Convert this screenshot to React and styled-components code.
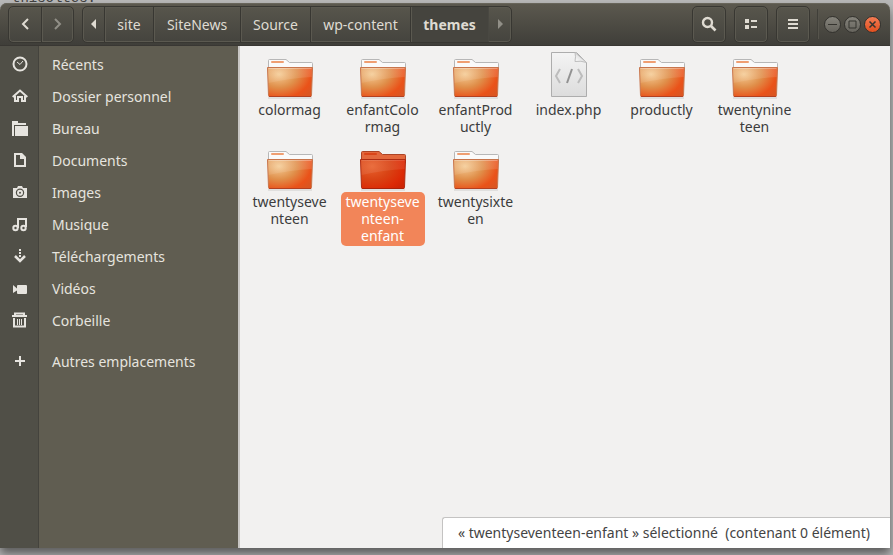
import React from 'react';
import styled, { createGlobalStyle, css } from 'styled-components';

const Global = createGlobalStyle`
  *, *::before, *::after { box-sizing: border-box; }
  body { margin: 0; overflow: hidden; background: #b9b9b9; font-family: "Noto Sans", "Open Sans", sans-serif; font-size: 14px; color: #444; }
  button { font: inherit; color: inherit; border: 0; padding: 0; background: none; }
`;

const Desktop = styled.div`
  position: relative;
  min-height: 100vh;
  padding: 3px 3px 7px 0;
  display: flex;
  background: #b9b9b9;
`;
const Behind = styled.div`
  position: absolute;
  top: 0; left: 0; right: 0;
  height: 3px;
  overflow: hidden;
  display: flex;
  align-items: flex-end;
  padding-left: 12px;
  color: #404040;
  font-family: "Liberation Mono", monospace;
  line-height: 10px;
`;
const Window = styled.div`
  position: relative;
  flex: 1;
  min-width: 0;
  display: flex;
  flex-direction: column;
  border-radius: 7px 7px 0 0;
  box-shadow: 0 6px 10px rgba(0, 0, 0, 0.5);
`;
const Header = styled.header`
  height: 43px;
  display: flex;
  align-items: center;
  padding: 0 8px;
  border-radius: 7px 7px 0 0;
  border-bottom: 1px solid #393733;
  background: linear-gradient(180deg, #5c594f, #3f3e39);
  box-shadow: inset 0 1px 0 #68655b;
  color: #dfdbd2;
`;
const frame = css`
  border: 1px solid #383732;
  border-radius: 5px;
  background: linear-gradient(180deg, #57554c, #45443e);
  box-shadow: inset 0 0 0 1px #5b5950;
`;
const Group = styled.nav`
  ${frame}
  height: 37px;
  display: flex;
  overflow: hidden;
  margin-right: ${p => p.$gap || 0}px;
`;
const Segment = styled.button`
  width: ${p => p.$w}px;
  display: flex;
  align-items: center;
  justify-content: center;
  color: ${p => (p.$dim ? '#918f87' : '#dfdbd2')};
  font-weight: ${p => (p.$current ? 700 : 400)};
  & + & { border-left: 1px solid #383732; box-shadow: inset 1px 0 0 #5b5950; }
  ${p => p.$current && css`
    && { background: #45443e; box-shadow: inset 1px 2px 3px #33322e; }
  `}
  ${p => p.$last && css`&& { border-left-color: #494842; box-shadow: none; }`}
`;
const Tools = styled.div`
  margin-left: auto;
  display: flex;
  gap: 8px;
`;
const Tool = styled.button`
  ${frame}
  && { border: 1px solid #383732; background: linear-gradient(180deg, #57554c, #45443e); }
  width: 34px;
  height: 37px;
  display: grid;
  place-items: center;
`;
const Rule = styled.div`
  width: 2px;
  height: 30px;
  margin: 0 5px 0 7px;
  background: linear-gradient(90deg, #403f39 50%, #56544c 50%);
`;
const Controls = styled.div`
  display: flex;
  gap: 3px;
  padding-right: 1px;
`;
const Control = styled.button`
  && { border: 1px solid #33322e; background: ${p => (p.$close ? 'linear-gradient(180deg, #f37b53, #e2501f)' : 'linear-gradient(180deg, #85837b, #66645d)')}; }
  width: 17px;
  height: 17px;
  border-radius: 50%;
  display: grid;
  place-items: center;
  color: #35342f;
`;
const Body = styled.div`
  flex: 1;
  display: flex;
  min-height: 0;
`;
const Sidebar = styled.aside`
  width: 240px;
  flex: none;
  padding-top: 2px;
  border-right: 2px solid #c8c6c4;
  background: linear-gradient(90deg, #504f47 38px, #44433d 38px, #44433d 39px, #605d51 39px);
`;
const Place = styled.a`
  height: 32px;
  display: grid;
  grid-template-columns: 39px 1fr;
  column-gap: 13px;
  align-items: center;
  color: #e6e4df;
  text-decoration: none;
  margin-top: ${p => (p.$apart ? 9 : 0)}px;
  svg { justify-self: center; }
`;
const Main = styled.main`
  position: relative;
  flex: 1;
  min-width: 0;
  background: #f2f1f0;
  padding: 5px 3px;
`;
const Files = styled.div`
  display: grid;
  grid-template-columns: repeat(auto-fill, 93px);
  grid-auto-rows: minmax(92px, auto);
  padding-right: 80px;
  align-items: start;
`;
const File = styled.button`
  display: flex;
  flex-direction: column;
  align-items: center;
  gap: 1px;
`;
const Label = styled.span`
  width: 84px;
  padding: 1px 0 2px;
  border-radius: 5px;
  line-height: 17px;
  white-space: pre;
  text-align: center;
  background: ${p => (p.$selected ? '#f28559' : 'transparent')};
  color: ${p => (p.$selected ? '#fff' : '#3c3c3c')};
`;
const Status = styled.div`
  position: absolute;
  right: 0;
  bottom: 0;
  height: 31px;
  padding: 0 20px 1px 15px;
  display: flex;
  align-items: center;
  white-space: pre;
  background: #fff;
  border: solid #c4c3c2;
  border-width: 1px 0 0 1px;
  border-radius: 3px 0 0 0;
`;

const Icon = ({ children, size = 16 }) => (
  <svg width={size} height={size} viewBox={`0 0 ${size} ${size}`} fill="none" stroke="currentColor" strokeWidth="2" aria-hidden="true">{children}</svg>
);
const solid = { fill: 'currentColor', stroke: 'none' };

function Folder({ selected }) {
  const id = selected ? 'sel' : 'std';
  return (
    <svg width="48" height="48" viewBox="0 0 48 48" aria-hidden="true">
      <defs>
        <radialGradient id={`${id}-body`} gradientUnits="userSpaceOnUse" cx="13" cy="23" r="39" gradientTransform="translate(0 6) scale(1 .75)">
          <stop offset="0" stopColor={selected ? '#e8622e' : '#f4cb94'} />
          <stop offset=".45" stopColor={selected ? '#d94415' : '#e08f4a'} />
          <stop offset=".82" stopColor={selected ? '#dc2a06' : '#ea5219'} />
          <stop offset="1" stopColor={selected ? '#cf2505' : '#dc5520'} />
        </radialGradient>
        <linearGradient id={`${id}-shine`} x2="0" y2="1">
          <stop stopColor="#fff" stopOpacity={selected ? '.08' : '.16'} />
          <stop offset="1" stopColor="#fff" stopOpacity=".08" />
        </linearGradient>
      </defs>
      <path d="M2 47h44" stroke="#000" strokeOpacity=".15" />
      <path d="M2.500 20V9.500q0-1 1-1h16.500l3.500 3h22q1 0 1 1V20z" fill={selected ? '#e3683d' : '#fafafa'} stroke={selected ? '#ad4426' : '#b7b7b7'} />
      <rect x="5" y="10" width="13" height="2" rx="1" fill={selected ? '#da4519' : '#ef9e71'} />
      <path d="M1.500 16.500h45L45.500 44.500q0 1-1 1h-41q-1 0-1-1z" fill={`url(#${id}-body)`} stroke={selected ? '#ae2c12' : '#c8754c'} />
      <path d="M2 17h44l-.3 9Q25 27 2.500 32z" fill={`url(#${id}-shine)`} />
      <path d="M2.500 17.500h43" stroke="#fff" strokeOpacity={selected ? '.12' : '.3'} />
      <path d="M3 45.500h42" stroke="#a51d05" strokeOpacity=".6" />
    </svg>
  );
}

const Php = () => (
  <svg width="48" height="48" viewBox="0 0 48 48" aria-hidden="true">
    <defs>
      <linearGradient id="paper" x2="0" y2="1"><stop stopColor="#f4f4f4" /><stop offset="1" stopColor="#dcdcdc" /></linearGradient>
      <linearGradient id="fold" x1="0" y1="1" x2="1" y2="0"><stop stopColor="#fff" /><stop offset="1" stopColor="#c8c8c8" /></linearGradient>
    </defs>
    <path d="M6.500 1.500h25l10 10v34h-35z" fill="url(#paper)" stroke="#adadad" />
    <path d="M30 1.500q1 4 0 9 6-1 11.500 1z" fill="url(#fold)" stroke="#bebebe" />
    <path d="m15 18-4 7 4 7M33 18l4 7-4 7" fill="none" stroke="#bcbcbc" strokeWidth="2" />
    <path d="m27 18-5 14" stroke="#929292" strokeWidth="2" />
  </svg>
);

const places = [
  ['Récents', <><circle cx="8" cy="8" r="6.500" /><path d="m5 6 3 2.500L11 5" strokeWidth="1" /></>],
  ['Dossier personnel', <><path d="m.7 9 7.300-6.500L15.300 9" /><path d="M3 8v5h3v-4h4v4h3V8" /></>],
  ['Bureau', <><path {...solid} d="M0 1h6v2h8v2H2v11H0z" /><path {...solid} d="M3 6h13v10H3z" /></>],
  ['Documents', <><path d="M3 2h6l4 4v8H3z" /><path {...solid} d="M8 1h2l4 4v2H8z" /></>],
  ['Images', <><path {...solid} fillRule="evenodd" d="M1 4h4l1-2h4l1 2h4v10H1zM8 4.500a4.200 4.200 0 100 8.400 4.200 4.200 0 000-8.400z" /><circle cx="8" cy="8.700" r="2" strokeWidth="2" /></>],
  ['Musique', <><path d="M6 12V3h8v8" /><circle cx="3.500" cy="12" r="2.200" /><circle cx="11.500" cy="12" r="2.200" /></>],
  ['Téléchargements', <><path d="M8 1v8" strokeDasharray="2 1" /><path d="m3 8 5 5 5-5" strokeWidth="2.500" /></>],
  ['Vidéos', <path {...solid} d="m1 5 4 3.500V6q0-1 1-1h8q1 0 1 1v7q0 1-1 1H6q-1 0-1-1v-2.500L1 13z" />],
  ['Corbeille', <><path d="M0 4h15M3 3V1.500h9V3" /><path d="M2 6v8.500h11V6" /><path d="M5.500 7v6M7.500 7v6M9.500 7v6" strokeWidth="1" /></>],
  ['Autres emplacements', <path d="M3 8h10M8 3v10" />],
];
const files = ['colormag', 'enfantColo\nrmag', 'enfantProd\nuctly', 'index.php', 'productly', 'twentynine\nteen', 'twentyseve\nnteen', 'twentyseve\nnteen-\nenfant', 'twentysixte\nen'];
const SELECTED = 7;

export default function App() {
  return (
    <Desktop>
      <Global />
      <Window>
        <Header>
          <Group $gap={8} aria-label="Historique">
            <Segment $w={32} aria-label="Précédent"><Icon><path d="m11 3-5 5 5 5" /></Icon></Segment>
            <Segment $w={32} $dim aria-label="Suivant"><Icon><path d="m5 3 5 5-5 5" /></Icon></Segment>
          </Group>
          <Group aria-label="Chemin">
            <Segment $w={21} aria-label="Défiler à gauche"><Icon><path {...solid} d="M10 3v10L5 8z" /></Icon></Segment>
            <Segment $w={49}>site</Segment>
            <Segment $w={87}>SiteNews</Segment>
            <Segment $w={70}>Source</Segment>
            <Segment $w={100}>wp-content</Segment>
            <Segment $w={78} $current>themes</Segment>
            <Segment $w={23} $dim $last aria-label="Défiler à droite"><Icon><path {...solid} d="M6 3v10l5-5z" /></Icon></Segment>
          </Group>
          <Tools>
            <Tool aria-label="Rechercher"><Icon><circle cx="6.500" cy="6.500" r="4.500" strokeWidth="2.400" /><path d="m10 10 4.500 4.500" strokeWidth="2.600" /></Icon></Tool>
            <Tool aria-label="Affichage"><Icon><path {...solid} d="M2 3h4v4H2zM2 9h4v4H2zM8 4h6v2H8zM8 10h6v2H8z" /></Icon></Tool>
            <Tool aria-label="Menu"><Icon><path d="M3 4h10M3 8h10M3 12h10" /></Icon></Tool>
          </Tools>
          <Rule />
          <Controls>
            <Control aria-label="Réduire"><Icon size={9}><path d="M0 4.500h9" strokeWidth="1" /></Icon></Control>
            <Control aria-label="Agrandir"><Icon size={9}><path d="M1 1h7v7H1z" strokeWidth="1" /></Icon></Control>
            <Control $close aria-label="Fermer"><Icon size={9}><path d="m1.500 1.500 6 6M7.500 1.500l-6 6" strokeWidth="1.500" /></Icon></Control>
          </Controls>
        </Header>
        <Body>
          <Sidebar>
            {places.map(([name, icon], i) => (
              <Place key={name} href="#" $apart={i === 9}><Icon>{icon}</Icon>{name}</Place>
            ))}
          </Sidebar>
          <Main>
            <Files>
              {files.map((name, i) => (
                <File key={name}>
                  {name === 'index.php' ? <Php /> : <Folder selected={i === SELECTED} />}
                  <Label $selected={i === SELECTED}>{name}</Label>
                </File>
              ))}
            </Files>
            <Status role="status">« twentyseventeen-enfant » sélectionné  (contenant 0 élément)</Status>
          </Main>
        </Body>
      </Window>
      <Behind aria-hidden="true">thisoltes:</Behind>
    </Desktop>
  );
}
